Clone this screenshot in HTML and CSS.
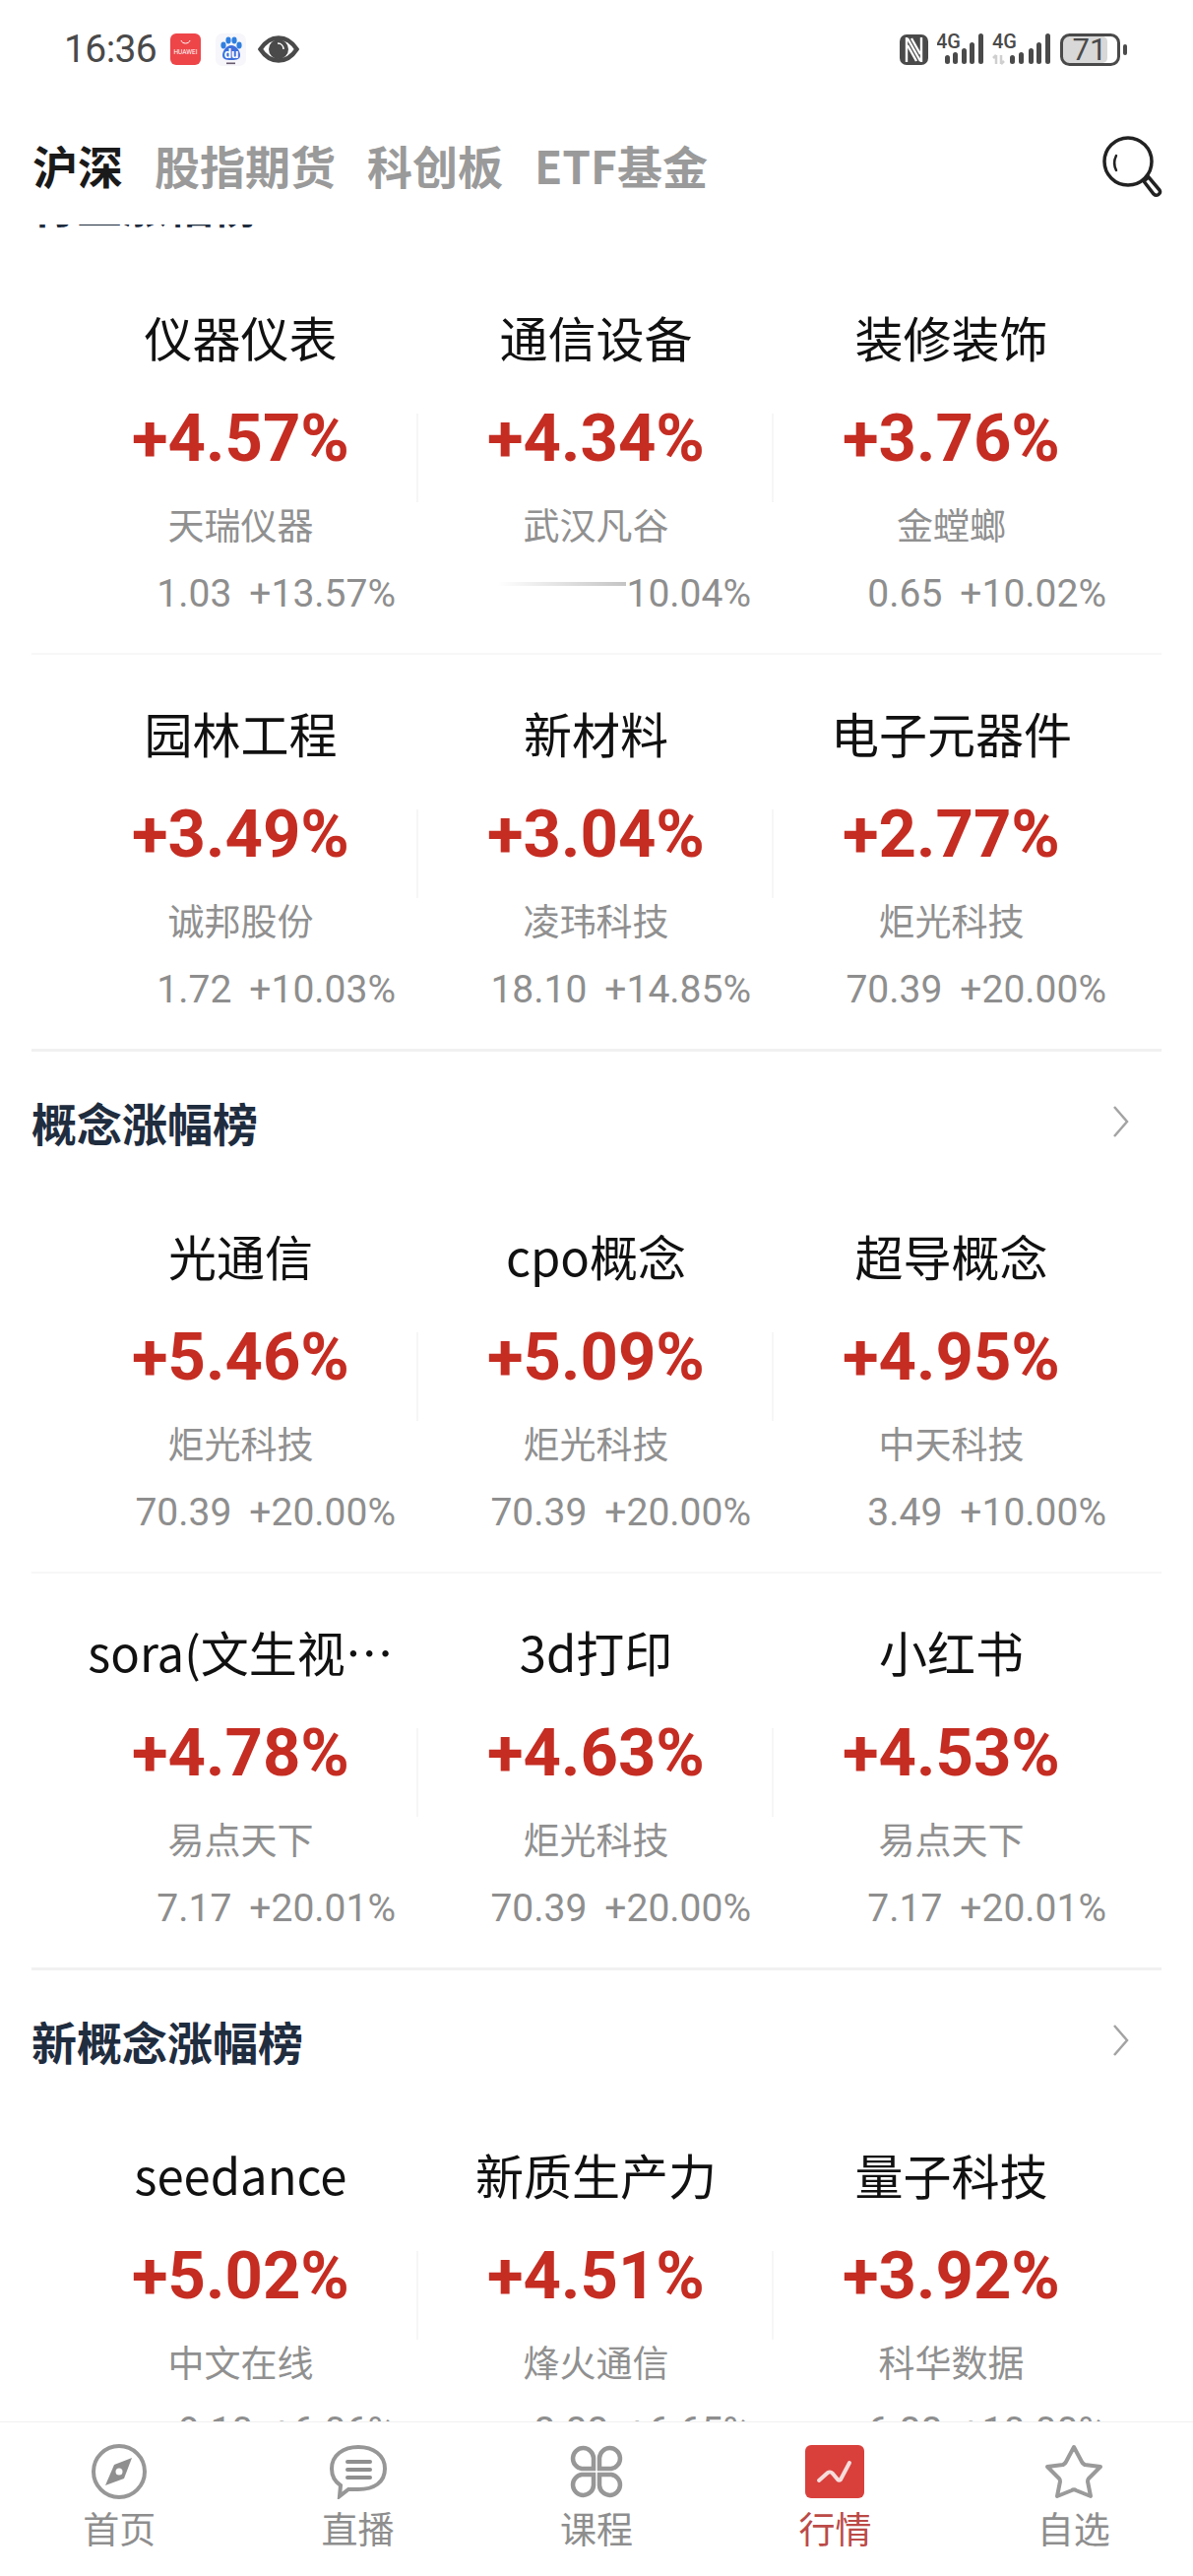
FILE: index.html
```html
<!DOCTYPE html>
<html lang="zh-CN">
<head>
    <meta charset="UTF-8">
    <meta name="viewport" content="width=device-width, initial-scale=1.0">
    <title>行情</title>
    <link rel="stylesheet" href="styles.css">
</head>
<body>
<div class="app">

    <div class="status-bar">
        <div class="status-left">
            <span class="time">16:36</span>
            <svg class="app-huawei" width="31" height="32" viewBox="0 0 31 32">
                <rect width="31" height="32" rx="6" fill="#ee4549"/>
                <path d="M11 7c1 4 8 4 9 0" fill="none" stroke="#fff" stroke-width="1"/>
                <text x="15.5" y="21" text-anchor="middle" class="huawei-text">HUAWEI</text>
            </svg>
            <svg class="app-baidu" width="31" height="33" viewBox="0 0 31 33">
                <rect width="31" height="33" rx="7" fill="#f6f6fb"/>
                <ellipse cx="8" cy="12" rx="2.6" ry="3.4" fill="#2f7fe0"/>
                <ellipse cx="13" cy="7" rx="2.6" ry="3.4" fill="#2f7fe0"/>
                <ellipse cx="19" cy="7" rx="2.6" ry="3.4" fill="#2f7fe0"/>
                <ellipse cx="24" cy="12" rx="2.6" ry="3.4" fill="#2f7fe0"/>
                <path d="M16 12c5 0 9 6 9 10s-3 5-9 5-9-1-9-5 4-10 9-10z" fill="#3f6fdc"/>
                <text x="16" y="25" text-anchor="middle" class="baidu-text">du</text>
                <rect x="11" y="29.5" width="9" height="1.6" fill="#6a5c70"/>
            </svg>
            <svg class="eye" width="42" height="28" viewBox="0 0 42 28">
                <path d="M2.5 14C8 5.5 14 2.5 21 2.5S34 5.5 39.5 14C34 22.500 28 25.500 21 25.500S8 22.500 2.500 14z" fill="none" stroke="#4a4a4a" stroke-width="4.500"/>
                <circle cx="21" cy="14" r="10" fill="#4a4a4a"/>
                <path d="M20 8c4 0 6 3 6 6" fill="none" stroke="#fff" stroke-width="1.500"/>
            </svg>
        </div>
        <div class="status-right">
            <svg width="29" height="31" viewBox="0 0 29 31">
                <rect width="29" height="31" rx="7" fill="#4a4a4a"/>
                <path d="M7 3v25M22 3v25M8 4l13 23M8 11l9 16M21 20l-9-16" fill="none" stroke="#fff" stroke-width="2.400"/>
            </svg>
            <svg width="47" height="33" viewBox="0 0 47 33">
                <text x="-1" y="15" class="net-text">4G</text>
                <rect x="8" y="22" width="5" height="9" rx="2.500" class="bar"/>
                <rect x="16" y="19" width="5" height="12" rx="2.500" class="bar"/>
                <rect x="25" y="15" width="5" height="16" rx="2.500" class="bar"/>
                <rect x="33" y="9" width="5" height="22" rx="2.500" class="bar"/>
                <rect x="42" y="0" width="5" height="31" rx="2.500" class="bar"/>
            </svg>
            <svg width="60" height="33" viewBox="0 0 60 33">
                <text x="0" y="15" class="net-text">4G</text>
                <path d="M4 22v9M1 25l3-3M9 22v9M12 28l-3 3" fill="none" stroke="#cfcfcf" stroke-width="2.500"/>
                <rect x="18" y="22" width="5" height="9" rx="2.500" class="bar"/>
                <rect x="27" y="19" width="5" height="12" rx="2.500" class="bar"/>
                <rect x="37" y="15" width="5" height="16" rx="2.500" class="bar"/>
                <rect x="45" y="9" width="5" height="22" rx="2.500" class="bar"/>
                <rect x="54" y="0" width="5" height="31" rx="2.500" class="bar"/>
            </svg>
            <svg width="68" height="33" viewBox="0 0 68 33">
                <rect x="3" y="3" width="45" height="27" rx="5" fill="#d8d8d8"/>
                <rect x="1.500" y="1.500" width="58" height="30" rx="8" fill="none" stroke="#4a4a4a" stroke-width="3"/>
                <text x="30" y="27" text-anchor="middle" class="battery-text">71</text>
                <rect x="64" y="11" width="4" height="11" rx="2" fill="#4a4a4a"/>
            </svg>
        </div>
    </div>

    <div class="tabs">
        <span class="tab active">沪深</span>
        <span class="tab">股指期货</span>
        <span class="tab">科创板</span>
        <span class="tab">ETF基金</span>
        <svg class="search-icon" width="62" height="64" viewBox="0 0 62 64">
            <circle cx="27" cy="27" r="24" fill="none" stroke="#222" stroke-width="3.500"/>
            <path d="M15 21c-3 6-2 11 0 15" fill="none" stroke="#222" stroke-width="2.500" stroke-linecap="round"/>
            <path d="M43 47l5-4 11 13c2 4-3 7-6 4z" fill="none" stroke="#222" stroke-width="3.500"/>
        </svg>
    </div>

    <div class="scroll-area">
        <div class="scroll-content">

            <section class="board">
                <div class="board-head">
                    <h2>行业涨幅榜</h2>
                    <svg class="chevron" width="18" height="34" viewBox="0 0 18 34"><path d="M2 2l13 15L2 32" fill="none" stroke="#a3a3a3" stroke-width="2.500"/></svg>
                </div>
                <div class="cell-row">
                    <div class="cell"><div class="cell-title">仪器仪表</div><div class="cell-pct">+4.57%</div><div class="cell-stock">天瑞仪器</div><div class="cell-price"><span>1.03</span><span>+13.57%</span></div></div>
                    <div class="cell"><div class="cell-title">通信设备</div><div class="cell-pct">+4.34%</div><div class="cell-stock">武汉凡谷</div><div class="cell-price"><i class="smear"></i><span>10.04%</span></div></div>
                    <div class="cell"><div class="cell-title">装修装饰</div><div class="cell-pct">+3.76%</div><div class="cell-stock">金螳螂</div><div class="cell-price"><span>0.65</span><span>+10.02%</span></div></div>
                </div>
                <div class="cell-row last">
                    <div class="cell"><div class="cell-title">园林工程</div><div class="cell-pct">+3.49%</div><div class="cell-stock">诚邦股份</div><div class="cell-price"><span>1.72</span><span>+10.03%</span></div></div>
                    <div class="cell"><div class="cell-title">新材料</div><div class="cell-pct">+3.04%</div><div class="cell-stock">凌玮科技</div><div class="cell-price"><span>18.10</span><span>+14.85%</span></div></div>
                    <div class="cell"><div class="cell-title">电子元器件</div><div class="cell-pct">+2.77%</div><div class="cell-stock">炬光科技</div><div class="cell-price"><span>70.39</span><span>+20.00%</span></div></div>
                </div>
            </section>

            <section class="board">
                <div class="board-head">
                    <h2>概念涨幅榜</h2>
                    <svg class="chevron" width="18" height="34" viewBox="0 0 18 34"><path d="M2 2l13 15L2 32" fill="none" stroke="#a3a3a3" stroke-width="2.500"/></svg>
                </div>
                <div class="cell-row">
                    <div class="cell"><div class="cell-title">光通信</div><div class="cell-pct">+5.46%</div><div class="cell-stock">炬光科技</div><div class="cell-price"><span>70.39</span><span>+20.00%</span></div></div>
                    <div class="cell"><div class="cell-title">cpo概念</div><div class="cell-pct">+5.09%</div><div class="cell-stock">炬光科技</div><div class="cell-price"><span>70.39</span><span>+20.00%</span></div></div>
                    <div class="cell"><div class="cell-title">超导概念</div><div class="cell-pct">+4.95%</div><div class="cell-stock">中天科技</div><div class="cell-price"><span>3.49</span><span>+10.00%</span></div></div>
                </div>
                <div class="cell-row last">
                    <div class="cell"><div class="cell-title">sora(文生视…</div><div class="cell-pct">+4.78%</div><div class="cell-stock">易点天下</div><div class="cell-price"><span>7.17</span><span>+20.01%</span></div></div>
                    <div class="cell"><div class="cell-title">3d打印</div><div class="cell-pct">+4.63%</div><div class="cell-stock">炬光科技</div><div class="cell-price"><span>70.39</span><span>+20.00%</span></div></div>
                    <div class="cell"><div class="cell-title">小红书</div><div class="cell-pct">+4.53%</div><div class="cell-stock">易点天下</div><div class="cell-price"><span>7.17</span><span>+20.01%</span></div></div>
                </div>
            </section>

            <section class="board">
                <div class="board-head">
                    <h2>新概念涨幅榜</h2>
                    <svg class="chevron" width="18" height="34" viewBox="0 0 18 34"><path d="M2 2l13 15L2 32" fill="none" stroke="#a3a3a3" stroke-width="2.500"/></svg>
                </div>
                <div class="cell-row">
                    <div class="cell"><div class="cell-title">seedance</div><div class="cell-pct">+5.02%</div><div class="cell-stock">中文在线</div><div class="cell-price"><span>9.10</span><span>+6.06%</span></div></div>
                    <div class="cell"><div class="cell-title">新质生产力</div><div class="cell-pct">+4.51%</div><div class="cell-stock">烽火通信</div><div class="cell-price"><span>8.88</span><span>+6.65%</span></div></div>
                    <div class="cell"><div class="cell-title">量子科技</div><div class="cell-pct">+3.92%</div><div class="cell-stock">科华数据</div><div class="cell-price"><span>6.88</span><span>+10.00%</span></div></div>
                </div>
            </section>

        </div>
    </div>

    <nav class="bottom-nav">
        <div class="nav-item">
            <svg width="60" height="56" viewBox="0 0 60 56">
                <ellipse cx="30" cy="28" rx="26" ry="26" fill="none" stroke="#979797" stroke-width="4"/>
                <path d="M43 14L35 35 16 42l9-21z" fill="#8f8f8f"/>
                <circle cx="30" cy="28" r="3.500" fill="#fff"/>
            </svg>
            <span>首页</span>
        </div>
        <div class="nav-item">
            <svg width="60" height="56" viewBox="0 0 60 56">
                <path d="M30 3c15 0 27 8 27 22S46 46 30 46c-4 0-7 0-10 0l-9 7 1-11C6 38 3 32 3 25 3 11 15 3 30 3z" fill="none" stroke="#979797" stroke-width="4"/>
                <path d="M19 18h23M19 26h23M19 34h23" fill="none" stroke="#8f8f8f" stroke-width="4" stroke-linecap="round"/>
            </svg>
            <span>直播</span>
        </div>
        <div class="nav-item">
            <svg width="60" height="56" viewBox="0 0 60 56">
                <g fill="none" stroke="#979797" stroke-width="4.500">
                    <path d="M27 25H15a10.500 10.500 0 1 1 12-11z"/>
                    <path d="M33 25h12a10.500 10.500 0 1 0-12-11z"/>
                    <path d="M27 31H15a10.500 10.500 0 1 0 12 11z"/>
                    <path d="M33 31h12a10.500 10.500 0 1 1-12 11z"/>
                </g>
            </svg>
            <span>课程</span>
        </div>
        <div class="nav-item active">
            <svg width="60" height="56" viewBox="0 0 60 56">
                <rect y="1" width="60" height="54" rx="6" fill="#d9403c"/>
                <path d="M14 37l9-8c2-1 3-1 5 1l5 6c1 1 2 1 3 0l9-17" fill="none" stroke="#f6dcdb" stroke-width="4" stroke-linecap="round" stroke-linejoin="round"/>
            </svg>
            <span>行情</span>
        </div>
        <div class="nav-item">
            <svg width="60" height="56" viewBox="0 0 60 56">
                <path d="M30 3l8 15c1 2 2 2 3 3l16 2-12 12c-1 1-1 2-1 3l3 15-15-6c-1-1-3-1-4 0l-15 6 3-15c0-1 0-2-1-3L3 23l16-2c1-1 2-1 3-3z" fill="none" stroke="#9a9a9a" stroke-width="4" stroke-linejoin="round"/>
            </svg>
            <span>自选</span>
        </div>
    </nav>

</div>
</body>
</html>
```

FILE: styles.css
```css
* {
    box-sizing: border-box;
}

body {
    margin: 0;
    background: #fff;
    font-family: "Noto Sans CJK SC", "Noto Sans", sans-serif;
}

.app {
    display: flex;
    flex-direction: column;
    height: 2616px;
    overflow: hidden;
}

/* status bar */
.status-bar {
    display: flex;
    justify-content: space-between;
    align-items: center;
    height: 100px;
    padding: 0 67px 0 65px;
    flex-shrink: 0;
}

.status-left,
.status-right {
    display: flex;
    align-items: center;
}

.status-right {
    gap: 9px;
}

.time {
    font-family: Roboto, sans-serif;
    font-size: 39px;
    letter-spacing: -0.6px;
    color: #4a4a4a;
    width: 108px;
}

.app-baidu {
    margin-left: 15px;
}

.eye {
    margin-left: 12px;
}

.huawei-text {
    font-family: Roboto, sans-serif;
    font-size: 6.5px;
    fill: #fff;
}

.baidu-text {
    font-family: Roboto, sans-serif;
    font-size: 13px;
    font-weight: 700;
    fill: #fff;
}

.net-text {
    font-family: Roboto, sans-serif;
    font-size: 20px;
    font-weight: 500;
    fill: #4a4a4a;
}

.bar {
    fill: #4a4a4a;
}

.battery-text {
    font-family: Roboto, sans-serif;
    font-size: 31px;
    fill: #4a4a4a;
}

/* top tabs */
.tabs {
    display: flex;
    align-items: center;
    gap: 32px;
    height: 128px;
    padding: 6px 0 0 33px;
    flex-shrink: 0;
    position: relative;
    z-index: 1;
    background: #fff;
}

.tab {
    font-size: 46px;
    font-weight: 700;
    line-height: 60px;
    color: #9a9a9a;
}

.tab.active {
    color: #1a1a1a;
}

.search-icon {
    margin-left: auto;
    margin-right: 31px;
    margin-top: 4px;
}

/* scrolled list */
.scroll-area {
    flex: 1;
    min-height: 0;
    overflow: hidden;
}

.scroll-content {
    margin-top: -93px;
}

.board {
    margin: 0 32px;
}

.board-head {
    display: flex;
    justify-content: space-between;
    align-items: center;
    height: 128px;
    padding: 14px 32px 0 0;
}

.board-head h2 {
    margin: 0;
    font-size: 46px;
    font-weight: 700;
    line-height: 60px;
    color: #1f2d3f;
}

.cell-row {
    display: grid;
    grid-template-columns: repeat(3, 361px);
    height: 402px;
    padding: 44px 0 35px 32px;
    border-bottom: 2px solid #f7f7f7;
}

.cell-row.last {
    border-bottom: 3px solid #f1f1f1;
    height: 403px;
}

.cell {
    position: relative;
    text-align: center;
    min-width: 0;
}

/* short line between two cells */
.cell:not(:last-child)::after {
    content: "";
    position: absolute;
    top: 113px;
    right: 0;
    width: 2px;
    height: 90px;
    background: #f6f6f6;
}

.cell-title {
    font-size: 49px;
    line-height: 70px;
    color: #111;
    white-space: nowrap;
}

.cell-pct {
    margin-top: 28px;
    font-family: Roboto, sans-serif;
    font-size: 67px;
    font-weight: 700;
    line-height: 80px;
    color: #c52c22;
}

.cell-stock {
    margin-top: 19px;
    font-size: 37px;
    line-height: 56px;
    color: #909090;
}

.cell-price {
    display: flex;
    justify-content: flex-end;
    gap: 18px;
    margin-top: 18px;
    padding-right: 23px;
    font-family: Roboto, sans-serif;
    font-size: 39px;
    line-height: 50px;
    color: #8e8e8e;
}

/* stray streak in front of the cut-off price */
.smear {
    width: 130px;
    height: 4px;
    margin: 13px -18px 0 0;
    background: linear-gradient(to right, rgba(200, 200, 200, 0), #c4c4c4);
}

/* bottom nav */
.bottom-nav {
    display: grid;
    grid-template-columns: repeat(5, 1fr);
    height: 157px;
    padding-top: 22px;
    flex-shrink: 0;
    background: #fff;
    border-top: 1px solid #f1f1f1;
    position: relative;
    z-index: 1;
}

.nav-item {
    display: flex;
    flex-direction: column;
    align-items: center;
    gap: 7px;
    font-size: 37px;
    line-height: 44px;
    color: #8e8e8e;
}

.nav-item.active {
    color: #bb4a47;
}
```
